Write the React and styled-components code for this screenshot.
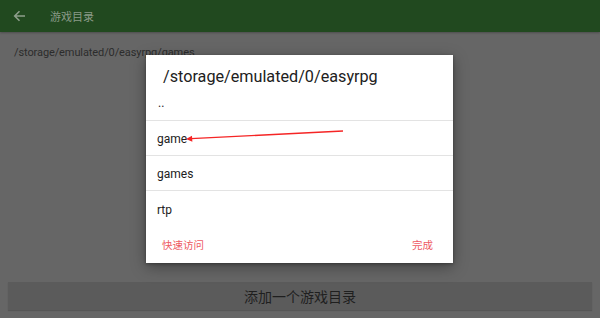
import React from "react";
import styled, { createGlobalStyle } from "styled-components";

const Global = createGlobalStyle`
  html, body { margin: 0; padding: 0; }
  body {
    width: 600px; height: 318px; overflow: hidden;
    background: #666666;
    font-family: Roboto, "Noto Sans CJK SC", sans-serif;
  }
`;

const Screen = styled.div`
  position: relative;
  width: 600px;
  height: 318px;
  display: flex;
  flex-direction: column;
  background: #666666;
`;

const AppBar = styled.header`
  height: 32px;
  flex: none;
  background: #21491f;
  display: flex;
  align-items: center;
  box-shadow: 0 1px 2px rgba(0, 0, 0, 0.25);
`;

const BackButton = styled.div`
  width: 50px;
  padding-left: 13px;
  box-sizing: border-box;
  display: flex;
  align-items: center;
  color: #8e9e8c;
`;

const AppTitle = styled.span`
  font-family: "Noto Sans CJK SC", sans-serif;
  font-size: 11px;
  color: #8a9a88;
`;

const Content = styled.main`
  flex: 1;
  display: flex;
  flex-direction: column;
  padding: 14px 8px 8px 8px;
`;

const PathLabel = styled.div`
  padding-left: 6px;
  font-size: 11px;
  line-height: 14px;
  color: #2c2c2c;
  letter-spacing: -0.1px;
`;

const Spacer = styled.div`
  flex: 1;
`;

const AddButton = styled.div`
  height: 28px;
  background: #5b5b5b;
  display: flex;
  align-items: center;
  justify-content: center;
  font-family: "Noto Sans CJK SC", sans-serif;
  font-size: 14px;
  color: #1f1f1f;
  box-shadow: 0 1px 1px rgba(0, 0, 0, 0.15);
`;

const Dialog = styled.div`
  position: absolute;
  left: 146px;
  top: 55px;
  width: 307px;
  height: 208px;
  background: #ffffff;
  box-shadow: 0 4px 14px rgba(0, 0, 0, 0.35), 0 1px 3px rgba(0, 0, 0, 0.3);
  display: flex;
  flex-direction: column;
`;

const DialogTitle = styled.div`
  height: 31px;
  box-sizing: border-box;
  padding: 13px 0 0 17px;
  font-size: 16.2px;
  line-height: 18px;
  color: #212121;
`;

const List = styled.div`
  display: flex;
  flex-direction: column;
`;

const Row = styled.div`
  height: 35px;
  box-sizing: border-box;
  display: flex;
  align-items: center;
  padding: ${(p) => (p.$up ? "0 0 0 12px" : "2px 0 0 11px")};
  font-size: 12px;
  color: #212121;
  border-bottom: ${(p) => (p.$last ? "none" : "1px solid #e3e3e3")};
`;

const Actions = styled.div`
  flex: 1;
  display: flex;
  align-items: center;
  justify-content: space-between;
  padding: 0 20px 0 16px;
`;

const ActionButton = styled.span`
  font-family: "Noto Sans CJK SC", sans-serif;
  font-size: 10.5px;
  color: #ee5a63;
`;

const Annotation = styled.svg`
  position: absolute;
  left: 0;
  top: 0;
  pointer-events: none;
`;

export default function App() {
  return (
    <>
      <Global />
      <Screen>
        <AppBar>
          <BackButton>
            <svg width="13" height="12" viewBox="0 0 13 12">
              <path d="M12 6H2M6.5 1.2L1.7 6l4.8 4.8" fill="none" stroke="currentColor" strokeWidth="1.6" />
            </svg>
          </BackButton>
          <AppTitle>游戏目录</AppTitle>
        </AppBar>
        <Content>
          <PathLabel>/storage/emulated/0/easyrpg/games</PathLabel>
          <Spacer />
          <AddButton>添加一个游戏目录</AddButton>
        </Content>
        <Dialog>
          <DialogTitle>/storage/emulated/0/easyrpg</DialogTitle>
          <List>
            <Row $up>..</Row>
            <Row>game</Row>
            <Row>games</Row>
            <Row $last>rtp</Row>
          </List>
          <Actions>
            <ActionButton>快速访问</ActionButton>
            <ActionButton>完成</ActionButton>
          </Actions>
        </Dialog>
        <Annotation width="600" height="318" viewBox="0 0 600 318">
          <line x1="343" y1="131" x2="191" y2="138.6" stroke="#f52525" strokeWidth="1.4" />
          <polygon points="186,139 192,135.8 192.4,141.8" fill="#f52525" />
        </Annotation>
      </Screen>
    </>
  );
}
